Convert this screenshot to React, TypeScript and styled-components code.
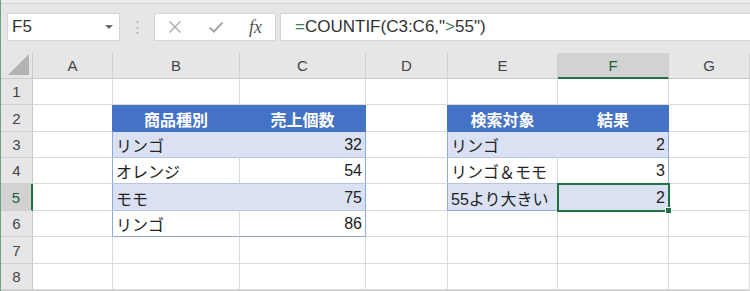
import styled, { createGlobalStyle } from "styled-components";

const GlobalStyle = createGlobalStyle`
  html, body {
    margin: 0;
    padding: 0;
    background: #ffffff;
    overflow: hidden;
  }
  body {
    font-family: "Liberation Sans", "Noto Sans CJK JP", sans-serif;
  }
`;

const GRID = "#dadada";
const TABLE_EDGE = "#8ea9db";
const TABLE_LINE = "#b4c6e7";
const HEAD = "#4472c4";
const BAND = "#d9e1f2";
const GREEN = "#217346";

const columns = ["A", "B", "C", "D", "E", "F", "G"];
const colWidths = [32, 80, 127, 126, 82, 110, 111, 81];
const rowHeights = [26, 27, 26, 26, 27, 26, 27, 26];

type Tone = "head" | "band" | "plain" | "none";
type CellData = { text?: string; tone: Tone; align?: "left" | "right" | "center" };

// table regions: [firstCol, lastCol, firstRow, lastRow] (col index 0 = A)
const tables = [
  [1, 2, 2, 6],
  [4, 5, 2, 5],
];

const data: Record<string, string> = {
  "1-2": "商品種別",
  "2-2": "売上個数",
  "4-2": "検索対象",
  "5-2": "結果",
  "1-3": "リンゴ",
  "2-3": "32",
  "4-3": "リンゴ",
  "5-3": "2",
  "1-4": "オレンジ",
  "2-4": "54",
  "4-4": "リンゴ＆モモ",
  "5-4": "3",
  "1-5": "モモ",
  "2-5": "75",
  "4-5": "55より大きい",
  "5-5": "2",
  "1-6": "リンゴ",
  "2-6": "86",
};

function tableAt(col: number, row: number) {
  return tables.find((t) => col >= t[0] && col <= t[1] && row >= t[2] && row <= t[3]);
}

function cellInfo(col: number, row: number): CellData {
  const t = tableAt(col, row);
  const text = data[`${col}-${row}`];
  if (!t) return { tone: "none" };
  if (row === t[2]) return { text, tone: "head", align: "center" };
  const band = (row - t[2]) % 2 === 1;
  const numeric = text !== undefined && /^\d+$/.test(text);
  return { text, tone: band ? "band" : "plain", align: numeric ? "right" : "left" };
}

function rightBorder(col: number, row: number) {
  const t = tableAt(col, row);
  const next = tableAt(col + 1, row);
  if (t && col === t[1]) return t[2] === row ? HEAD : TABLE_EDGE;
  if (!t && next) return next[2] === row ? HEAD : TABLE_EDGE;
  if (t) {
    const info = cellInfo(col, row);
    if (info.tone === "head") return HEAD;
    if (info.tone === "band") return BAND;
  }
  return GRID;
}

function bottomBorder(col: number, row: number) {
  const t = tableAt(col, row);
  if (t && row === t[3]) return TABLE_EDGE;
  if (t) return row === t[2] ? HEAD : TABLE_LINE;
  return GRID;
}

function CrossIcon() {
  return (
    <svg width="14" height="14" viewBox="0 0 14 14">
      <path d="M1.5 1.5 L12.5 12.5 M12.5 1.5 L1.5 12.5" stroke="#a9a9a9" strokeWidth="1.4" fill="none" />
    </svg>
  );
}

function CheckIcon() {
  return (
    <svg width="16" height="14" viewBox="0 0 16 14">
      <path d="M1.5 7.5 L6 11.5 L14.5 2.5" stroke="#a9a9a9" strokeWidth="2" fill="none" />
    </svg>
  );
}

function CornerIcon() {
  return (
    <svg width="22" height="22" viewBox="0 0 22 22">
      <polygon points="21,0 21,21 0,21" fill="#b3b3b3" />
    </svg>
  );
}

export default function App() {
  const selCol = 5;
  const selRow = 5;
  return (
    <Window>
      <GlobalStyle />
      <Toolbar>
        <TopStrip />
        <BarRow>
          <NameBox>
            <span>F5</span>
            <Caret />
          </NameBox>
          <Grip>⋮</Grip>
          <FxBox>
            <CrossIcon />
            <CheckIcon />
            <Fx>fx</Fx>
          </FxBox>
          <FormulaBox>
            <Op>=</Op>COUNTIF(C3:C6,"<Op>&gt;</Op>55")
          </FormulaBox>
        </BarRow>
      </Toolbar>
      <Sheet
        $cols={colWidths.map((w) => `${w}px`).join(" ")}
        $rows={["26px", ...rowHeights.map((h) => `${h}px`)].join(" ")}
      >
        <Corner>
          <CornerIcon />
        </Corner>
        {columns.map((c, i) => (
          <ColHead key={c} $active={i === selCol}>
            {c}
          </ColHead>
        ))}
        {rowHeights.map((_, ri) => {
          const row = ri + 1;
          return [
            <RowHead key={`h${row}`} $active={row === selRow}>
              {row}
            </RowHead>,
            ...columns.map((_, col) => {
              const info = cellInfo(col, row);
              const selected = col === selCol && row === selRow;
              return (
                <Cell
                  key={`${col}-${row}`}
                  $tone={info.tone}
                  $align={info.align ?? "left"}
                  $br={rightBorder(col, row)}
                  $bb={bottomBorder(col, row)}
                  $selected={selected}
                >
                  {info.text}
                </Cell>
              );
            }),
          ];
        })}
      </Sheet>
    </Window>
  );
}

const Window = styled.div`
  width: 749px;
  height: 291px;
  border-left: 1px solid #6f9e80;
  background: #ffffff;
  display: flex;
  flex-direction: column;
  overflow: hidden;
`;

const Toolbar = styled.div`
  height: 53px;
  background: #e6e6e6;
  display: flex;
  flex-direction: column;
`;

const TopStrip = styled.div`
  height: 3px;
  background: #ececec;
  border-bottom: 1px solid #d2d2d2;
`;

const BarRow = styled.div`
  display: flex;
  align-items: center;
  padding-top: 9px;
  height: 28px;
`;

const Box = styled.div`
  height: 28px;
  box-sizing: border-box;
  background: #ffffff;
  border: 1px solid #d6d6d6;
  display: flex;
  align-items: center;
`;

const NameBox = styled(Box)`
  margin-left: 6px;
  width: 113px;
  padding: 0 6px 0 4px;
  justify-content: space-between;
  font-size: 17px;
  color: #333333;
`;

const Caret = styled.span`
  width: 0;
  height: 0;
  border-left: 4px solid transparent;
  border-right: 4px solid transparent;
  border-top: 4px solid #6a6a6a;
`;

const Grip = styled.div`
  width: 34px;
  text-align: center;
  color: #b0b0b0;
  font-size: 15px;
`;

const FxBox = styled(Box)`
  width: 122px;
  padding: 0 0 0 13px;
  gap: 26px;
  & > svg:nth-child(2) {
    margin-right: -1px;
  }
`;

const Fx = styled.span`
  font-family: "Liberation Serif", serif;
  font-style: italic;
  font-size: 18px;
  color: #555555;
`;

const FormulaBox = styled(Box)`
  flex: 1;
  margin-left: 4px;
  border-right: none;
  padding-left: 14px;
  font-size: 17px;
  color: #333333;
  white-space: pre;
`;

const Op = styled.span`
  color: #3f7f56;
`;

const Sheet = styled.div<{ $cols: string; $rows: string }>`
  display: grid;
  grid-template-columns: ${(p) => p.$cols};
  grid-template-rows: ${(p) => p.$rows};
  border-bottom: 1px solid #cfcfcf;
  font-size: 16px;
  color: #222222;
`;

const HeaderCell = styled.div`
  box-sizing: border-box;
  background: #e6e6e6;
  display: flex;
  align-items: center;
  justify-content: center;
  color: #444444;
  font-size: 15px;
`;

const Corner = styled(HeaderCell)`
  border-right: 1px solid #c9c9c9;
  border-bottom: 1px solid #c9c9c9;
  justify-content: flex-end;
  align-items: flex-end;
  padding: 0 2px 2px 0;
`;

const ColHead = styled(HeaderCell)<{ $active?: boolean }>`
  border-right: 1px solid #d0d0d0;
  border-bottom: ${(p) => (p.$active ? `2px solid ${GREEN}` : "1px solid #c9c9c9")};
  background: ${(p) => (p.$active ? "#d2d2d2" : "#e6e6e6")};
  color: ${(p) => (p.$active ? "#1e5e3a" : "#444444")};
`;

const RowHead = styled(HeaderCell)<{ $active?: boolean }>`
  border-bottom: 1px solid #d0d0d0;
  border-right: ${(p) => (p.$active ? `2px solid ${GREEN}` : "1px solid #c9c9c9")};
  background: ${(p) => (p.$active ? "#d2d2d2" : "#e6e6e6")};
  color: ${(p) => (p.$active ? "#1e5e3a" : "#444444")};
`;

const toneBg: Record<Tone, string> = {
  head: HEAD,
  band: BAND,
  plain: "#ffffff",
  none: "#ffffff",
};

const Cell = styled.div<{
  $tone: Tone;
  $align: "left" | "right" | "center";
  $br: string;
  $bb: string;
  $selected?: boolean;
}>`
  position: relative;
  box-sizing: border-box;
  display: flex;
  align-items: center;
  justify-content: ${(p) =>
    p.$align === "right" ? "flex-end" : p.$align === "center" ? "center" : "flex-start"};
  padding: 1px 3px 0 3px;
  background: ${(p) => toneBg[p.$tone]};
  border-right: 1px solid ${(p) => p.$br};
  border-bottom: 1px solid ${(p) => p.$bb};
  color: ${(p) => (p.$tone === "head" ? "#ffffff" : "#222222")};
  font-weight: ${(p) => (p.$tone === "head" ? 700 : 400)};
  font-size: 16px;
  white-space: nowrap;
  z-index: ${(p) => (p.$selected ? 2 : "auto")};
  outline: ${(p) => (p.$selected ? `2px solid ${GREEN}` : "none")};
  outline-offset: -1px;

  &::after {
    content: "";
    display: ${(p) => (p.$selected ? "block" : "none")};
    position: absolute;
    right: -4px;
    bottom: -4px;
    width: 5px;
    height: 5px;
    background: ${GREEN};
    border: 1px solid #ffffff;
  }
`;
